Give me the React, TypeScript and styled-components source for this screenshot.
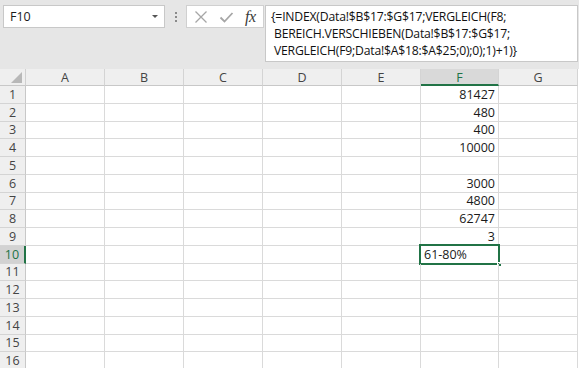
import React from "react";
import styled, { createGlobalStyle, css } from "styled-components";

const GREEN = "#217346";

const Global = createGlobalStyle`
  html, body { margin: 0; padding: 0; }
  body {
    background: #e6e6e6;
    font-family: "Open Sans", "Noto Sans", sans-serif;
    overflow: hidden;
  }
`;

const Page = styled.div`
  width: 579px;
  height: 368px;
  display: flex;
  flex-direction: column;
  overflow: hidden;
`;

const Toolbar = styled.div`
  flex: 0 0 69px;
  height: 69px;
  box-sizing: border-box;
  display: flex;
  align-items: flex-start;
  padding: 5px 1px 0 3px;
  background: #e6e6e6;
`;

const NameBox = styled.div`
  width: 162px;
  height: 23px;
  box-sizing: border-box;
  background: #fff;
  border: 1px solid #c8c8c8;
  display: flex;
  align-items: center;
  justify-content: space-between;
  padding: 0 6px 0 6px;
  font-size: 12.5px;
  color: #1a1a1a;
`;

const Arrow = styled.span`
  width: 0;
  height: 0;
  border-left: 3px solid transparent;
  border-right: 3px solid transparent;
  border-top: 3px solid #555;
`;

const Grip = styled.div`
  width: 21px;
  height: 23px;
  display: flex;
  flex-direction: column;
  align-items: center;
  justify-content: center;
  gap: 2px;
  span {
    width: 2px;
    height: 2px;
    background: #8a8a8a;
  }
`;

const Buttons = styled.div`
  width: 78px;
  height: 23px;
  box-sizing: border-box;
  background: #fff;
  border: 1px solid #d0d0d0;
  display: flex;
  align-items: center;
  justify-content: space-around;
  padding: 0 2px;
`;

const Fx = styled.span`
  font-family: "Liberation Serif", "DejaVu Serif", serif;
  font-style: italic;
  font-size: 16px;
  line-height: 16px;
  color: #3a3a3a;
  letter-spacing: -0.5px;
`;

const FormulaBox = styled.div`
  margin-left: 1px;
  flex: 1;
  height: 57px;
  box-sizing: border-box;
  background: #fff;
  border: 1px solid #c8c8c8;
  padding: 2px 4px 0 5px;
  font-family: "Open Sans", "Noto Sans", sans-serif;
  font-size: 12.2px;
  line-height: 17px;
  color: #111;
  white-space: pre;
  letter-spacing: -0.2px;
`;

const Grid = styled.div`
  display: grid;
  grid-template-columns: 26px 79px 79px 79px 79px 79px 78px 79px;
  grid-template-rows: 17px;
  grid-auto-rows: 17.75px;
  background: #fff;
  font-size: 12.5px;
  color: #1a1a1a;
`;

const headerBase = css`
  box-sizing: border-box;
  background: #efefef;
  color: #444;
  display: flex;
  align-items: center;
  justify-content: center;
`;

const Corner = styled.div`
  ${headerBase};
  position: relative;
  border-right: 1px solid #d0d0d0;
  border-bottom: 1px solid #c8c8c8;
  &::after {
    content: "";
    position: absolute;
    right: 3px;
    bottom: 2px;
    width: 0;
    height: 0;
    border-left: 11px solid transparent;
    border-bottom: 11px solid #b8b8b8;
  }
`;

const ColHeader = styled.div<{ $sel?: boolean }>`
  ${headerBase};
  border-right: 1px solid #d4d4d4;
  border-bottom: ${(p) => (p.$sel ? `2px solid ${GREEN}` : "1px solid #c8c8c8")};
  background: ${(p) => (p.$sel ? "#d9d9d9" : "#efefef")};
  color: ${(p) => (p.$sel ? GREEN : "#444")};
  padding-top: ${(p) => (p.$sel ? "1px" : "0")};
`;

const RowHeader = styled.div<{ $sel?: boolean }>`
  ${headerBase};
  border-right: ${(p) => (p.$sel ? `2px solid ${GREEN}` : "1px solid #c8c8c8")};
  border-bottom: 1px solid #d4d4d4;
  background: ${(p) => (p.$sel ? "#d2d2d2" : "#efefef")};
  color: ${(p) => (p.$sel ? GREEN : "#444")};
`;

const Cell = styled.div<{ $num?: boolean; $active?: boolean }>`
  box-sizing: border-box;
  position: relative;
  border-right: 1px solid #dadada;
  border-bottom: 1px solid #dadada;
  display: flex;
  align-items: center;
  justify-content: ${(p) => (p.$num ? "flex-end" : "flex-start")};
  padding: 0 3px;
  white-space: nowrap;
  ${(p) =>
    p.$active &&
    css`
      &::before {
        content: "";
        position: absolute;
        left: -2px;
        top: -2px;
        right: -2px;
        bottom: -2px;
        border: 2px solid ${GREEN};
        pointer-events: none;
      }
      &::after {
        content: "";
        position: absolute;
        right: -4px;
        bottom: -4px;
        width: 5px;
        height: 5px;
        background: ${GREEN};
        border: 1px solid #fff;
        box-sizing: border-box;
      }
    `}
`;

const cols = ["A", "B", "C", "D", "E", "F", "G"];
const fValues: Record<number, string> = {
  1: "81427",
  2: "480",
  3: "400",
  4: "10000",
  6: "3000",
  7: "4800",
  8: "62747",
  9: "3",
};

const XIcon = () => (
  <svg width="14" height="14" viewBox="0 0 14 14">
    <path d="M1.5 1.5 L12.5 12.5 M12.5 1.5 L1.5 12.5" stroke="#a6a6a6" strokeWidth="1.3" fill="none" />
  </svg>
);

const CheckIcon = () => (
  <svg width="15" height="14" viewBox="0 0 15 14">
    <path d="M1.5 7.5 L5.5 11.5 L13.5 3" stroke="#a6a6a6" strokeWidth="1.8" fill="none" />
  </svg>
);

export default function App() {
  const rows = Array.from({ length: 16 }, (_, i) => i + 1);
  return (
    <Page>
      <Global />
      <Toolbar>
        <NameBox>
          <span>F10</span>
          <Arrow />
        </NameBox>
        <Grip>
          <span />
          <span />
          <span />
        </Grip>
        <Buttons>
          <XIcon />
          <CheckIcon />
          <Fx>fx</Fx>
        </Buttons>
        <FormulaBox>
          {"{=INDEX(Data!$B$17:$G$17;VERGLEICH(F8;\n BEREICH.VERSCHIEBEN(Data!$B$17:$G$17;\n VERGLEICH(F9;Data!$A$18:$A$25;0);0);1)+1)}"}
        </FormulaBox>
      </Toolbar>
      <Grid>
        <Corner />
        {cols.map((c) => (
          <ColHeader key={c} $sel={c === "F"}>
            {c}
          </ColHeader>
        ))}
        {rows.map((r) => (
          <React.Fragment key={r}>
            <RowHeader $sel={r === 10}>{r}</RowHeader>
            {cols.map((c) => {
              if (c === "F") {
                if (r === 10)
                  return (
                    <Cell key={c} $active>
                      61-80%
                    </Cell>
                  );
                return (
                  <Cell key={c} $num>
                    {fValues[r] ?? ""}
                  </Cell>
                );
              }
              return <Cell key={c} />;
            })}
          </React.Fragment>
        ))}
      </Grid>
    </Page>
  );
}
